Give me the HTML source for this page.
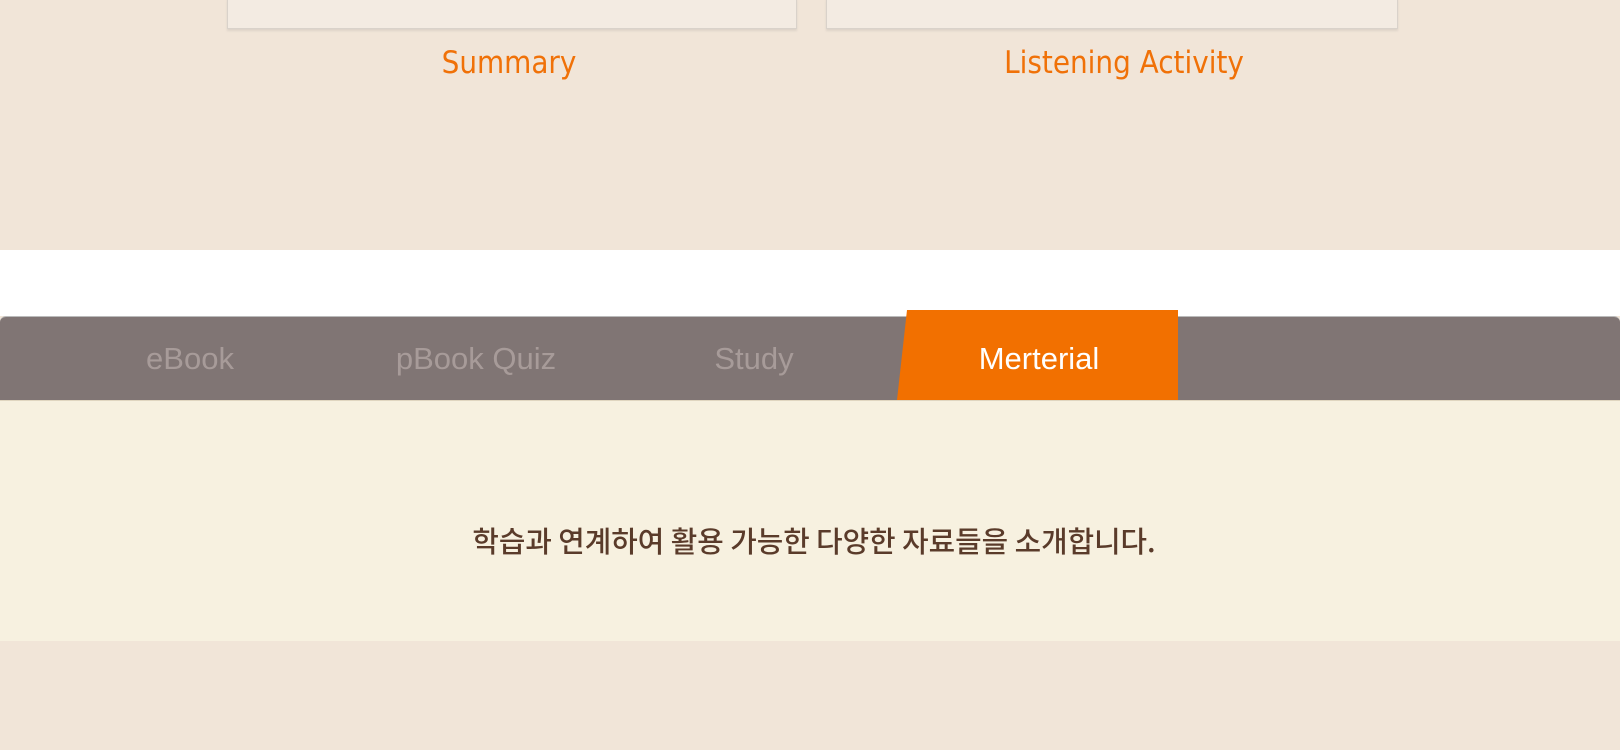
<!DOCTYPE html>
<html><head><meta charset="utf-8"><style>
body{margin:0;width:1620px;height:750px;overflow:hidden;background:#f1e5d8;font-family:"Liberation Sans","Noto Sans CJK KR",sans-serif;position:relative}
.card{position:absolute;top:-2px;height:29px;background:#f3ebe2;border:1px solid #d9d2ca;box-shadow:0 2px 2px #ddd3c8}
.cap{position:absolute;top:45px;color:#f07108;font-size:31px;text-align:center;width:600px;font-family:"DejaVu Sans Condensed","Liberation Sans",sans-serif}
.white{position:absolute;top:250px;left:0;width:1620px;height:66px;background:#fff}
.bar{position:absolute;top:316px;left:0;width:1620px;height:84px;background:#807574;border-radius:6px 6px 0 0;border-top:1px solid #bbb}
.tab{position:absolute;top:341px;color:#a79b99;font-size:31px;width:300px;text-align:center}
.cream{position:absolute;top:400px;left:0;width:1620px;height:240px;background:#f7f1e0;border-top:1px solid #e0d6c0}
</style></head><body>
<div class="card" style="left:227px;width:568px"></div>
<div class="card" style="left:826px;width:570px"></div>
<div class="cap" style="left:209px">Summary</div>
<div class="cap" style="left:824px">Listening Activity</div>
<div class="white"></div>
<div class="bar"></div>
<svg style="position:absolute;left:0;top:0" width="1620" height="750"><polygon points="907,310 1178,310 1178,400 897,400" fill="#f27000"/></svg>
<div class="tab" style="left:40px">eBook</div>
<div class="tab" style="left:326px">pBook Quiz</div>
<div class="tab" style="left:604px">Study</div>
<div class="tab" style="left:889px;color:#fff">Merterial</div>
<div class="cream"></div>
<div style="position:absolute;top:520px;left:0;width:1628px;text-align:center;font-size:28.8px;font-weight:500;font-family:'Noto Sans CJK KR',sans-serif;color:#5a3b2a">학습과 연계하여 활용 가능한 다양한 자료들을 소개합니다.</div>
</body></html>
